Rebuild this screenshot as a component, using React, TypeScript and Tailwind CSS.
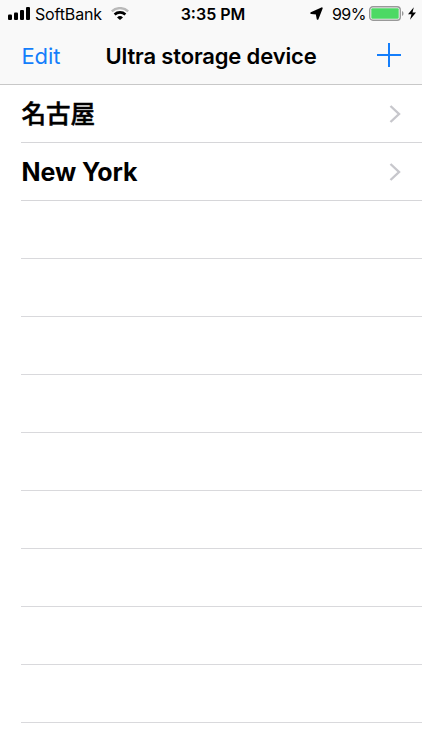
type Device = {
  name: string;
  lang: "ja" | "en";
};

const devices: Device[] = [
  { name: "名古屋", lang: "ja" },
  { name: "New York", lang: "en" },
];

const emptyRows = Array.from({ length: 9 }, (_, i) => i);

function SignalIcon() {
  return (
    <svg className="-mt-px" width="22" height="13" viewBox="0 0 22 13" fill="#000">
      <rect x="0" y="7.5" width="4" height="5.5" rx="1.1" />
      <rect x="6" y="5.5" width="4" height="7.5" rx="1.1" />
      <rect x="12" y="3" width="4" height="10" rx="1.1" />
      <rect x="18" y="0" width="4" height="13" rx="1.1" />
    </svg>
  );
}

function WifiIcon() {
  return (
    <svg className="-mt-px" width="18" height="13" viewBox="0 0 18 13" fill="none">
      {/* weakest ring is dimmed */}
      <path d="M0.8 4.3a12.2 12.2 0 0 1 16.4 0" stroke="#b9b9b9" strokeWidth="2.4" />
      <path d="M3.6 7.5a8 8 0 0 1 10.8 0" stroke="#000" strokeWidth="2.6" />
      <path d="M6 10.4a4.4 4.4 0 0 1 6 0L9 13z" fill="#000" />
    </svg>
  );
}

function StatusBar() {
  return (
    <div className="grid h-[27px] grid-cols-[1fr_auto_1fr] items-center pl-2 pr-[6px] text-[16px]">
      <div className="flex items-center">
        <SignalIcon />
        <span className="ml-[5px] tracking-[-0.15px]">SoftBank</span>
        <span className="ml-[9px]">
          <WifiIcon />
        </span>
      </div>
      <span className="relative left-px font-semibold">3:35 PM</span>
      <div className="flex items-center justify-end">
        <svg width="13" height="13" viewBox="0 0 13 13">
          <path
            d="M11.8 1.2L7.6 11.8L6.6 6.6L1.2 6z"
            fill="#000"
            stroke="#000"
            strokeWidth="1.8"
            strokeLinejoin="round"
          />
        </svg>
        <span className="ml-[9px] mr-[-1px] tracking-[-0.5px]">99%</span>
        <svg className="ml-1" width="36" height="15" viewBox="0 0 36 15">
          <rect x="0.7" y="0.7" width="30.6" height="13.6" rx="3.2" fill="none" stroke="#999" strokeWidth="1.4" />
          <rect x="2.3" y="2.3" width="27.4" height="10.4" rx="1" fill="#4cd964" />
          <path d="M33 5v5c2-.8 2-4.2 0-5z" fill="#999" />
        </svg>
        <svg className="ml-[3px]" width="8" height="13" viewBox="0 0 8 13">
          <path d="M5.8 0.3L0 7.2h3.5L2 12.7l6-7.2H4.5z" fill="#000" />
        </svg>
      </div>
    </div>
  );
}

function NavBar() {
  return (
    <header className="grid h-[57px] grid-cols-[1fr_auto_1fr] items-center px-[21px] text-[22px]">
      <button className="pl-[0.5px] pt-0.5 text-left tracking-[-0.1px] text-[#147efb]">Edit</button>
      <h1 className="pt-0.5 font-semibold tracking-[-0.15px]">Ultra storage device</h1>
      <button className="flex justify-end pb-0.5" aria-label="Add">
        <svg width="24" height="24" viewBox="0 0 24 24" stroke="#147efb" strokeWidth="2">
          <path d="M12 0v24M0 12h24" />
        </svg>
      </button>
    </header>
  );
}

export default function App() {
  return (
    <div className="h-[750px] overflow-hidden bg-white font-['Inter','Noto_Sans_CJK_JP',sans-serif] text-black">
      <div className="h-[85px] border-b border-[#c8c8c8] bg-[#f9f9f9]">
        <StatusBar />
        <NavBar />
      </div>
      <ul className="pl-[21px]">
        {devices.map((device) => (
          <li
            key={device.name}
            className="flex h-[58px] items-center justify-between border-b border-[#d6d6d9] pr-[21px]"
          >
            <span
              lang={device.lang}
              className={`pl-[0.5px] ${
                device.lang === "ja"
                  ? "pt-px text-[24.5px] font-medium [-webkit-text-stroke:0.5px_black]"
                  : "pt-[3px] text-[25px] font-bold tracking-[-0.1px]"
              }`}
            >
              {device.name}
            </span>
            <svg width="12" height="18" viewBox="0 0 12 18" fill="none">
              <path d="M1.5 1l8.5 8-8.5 8" stroke="#c7c7cc" strokeWidth="2.4" />
            </svg>
          </li>
        ))}
        {emptyRows.map((row) => (
          <li key={row} className="h-[58px] border-b border-[#d9d9dc]" />
        ))}
      </ul>
    </div>
  );
}
